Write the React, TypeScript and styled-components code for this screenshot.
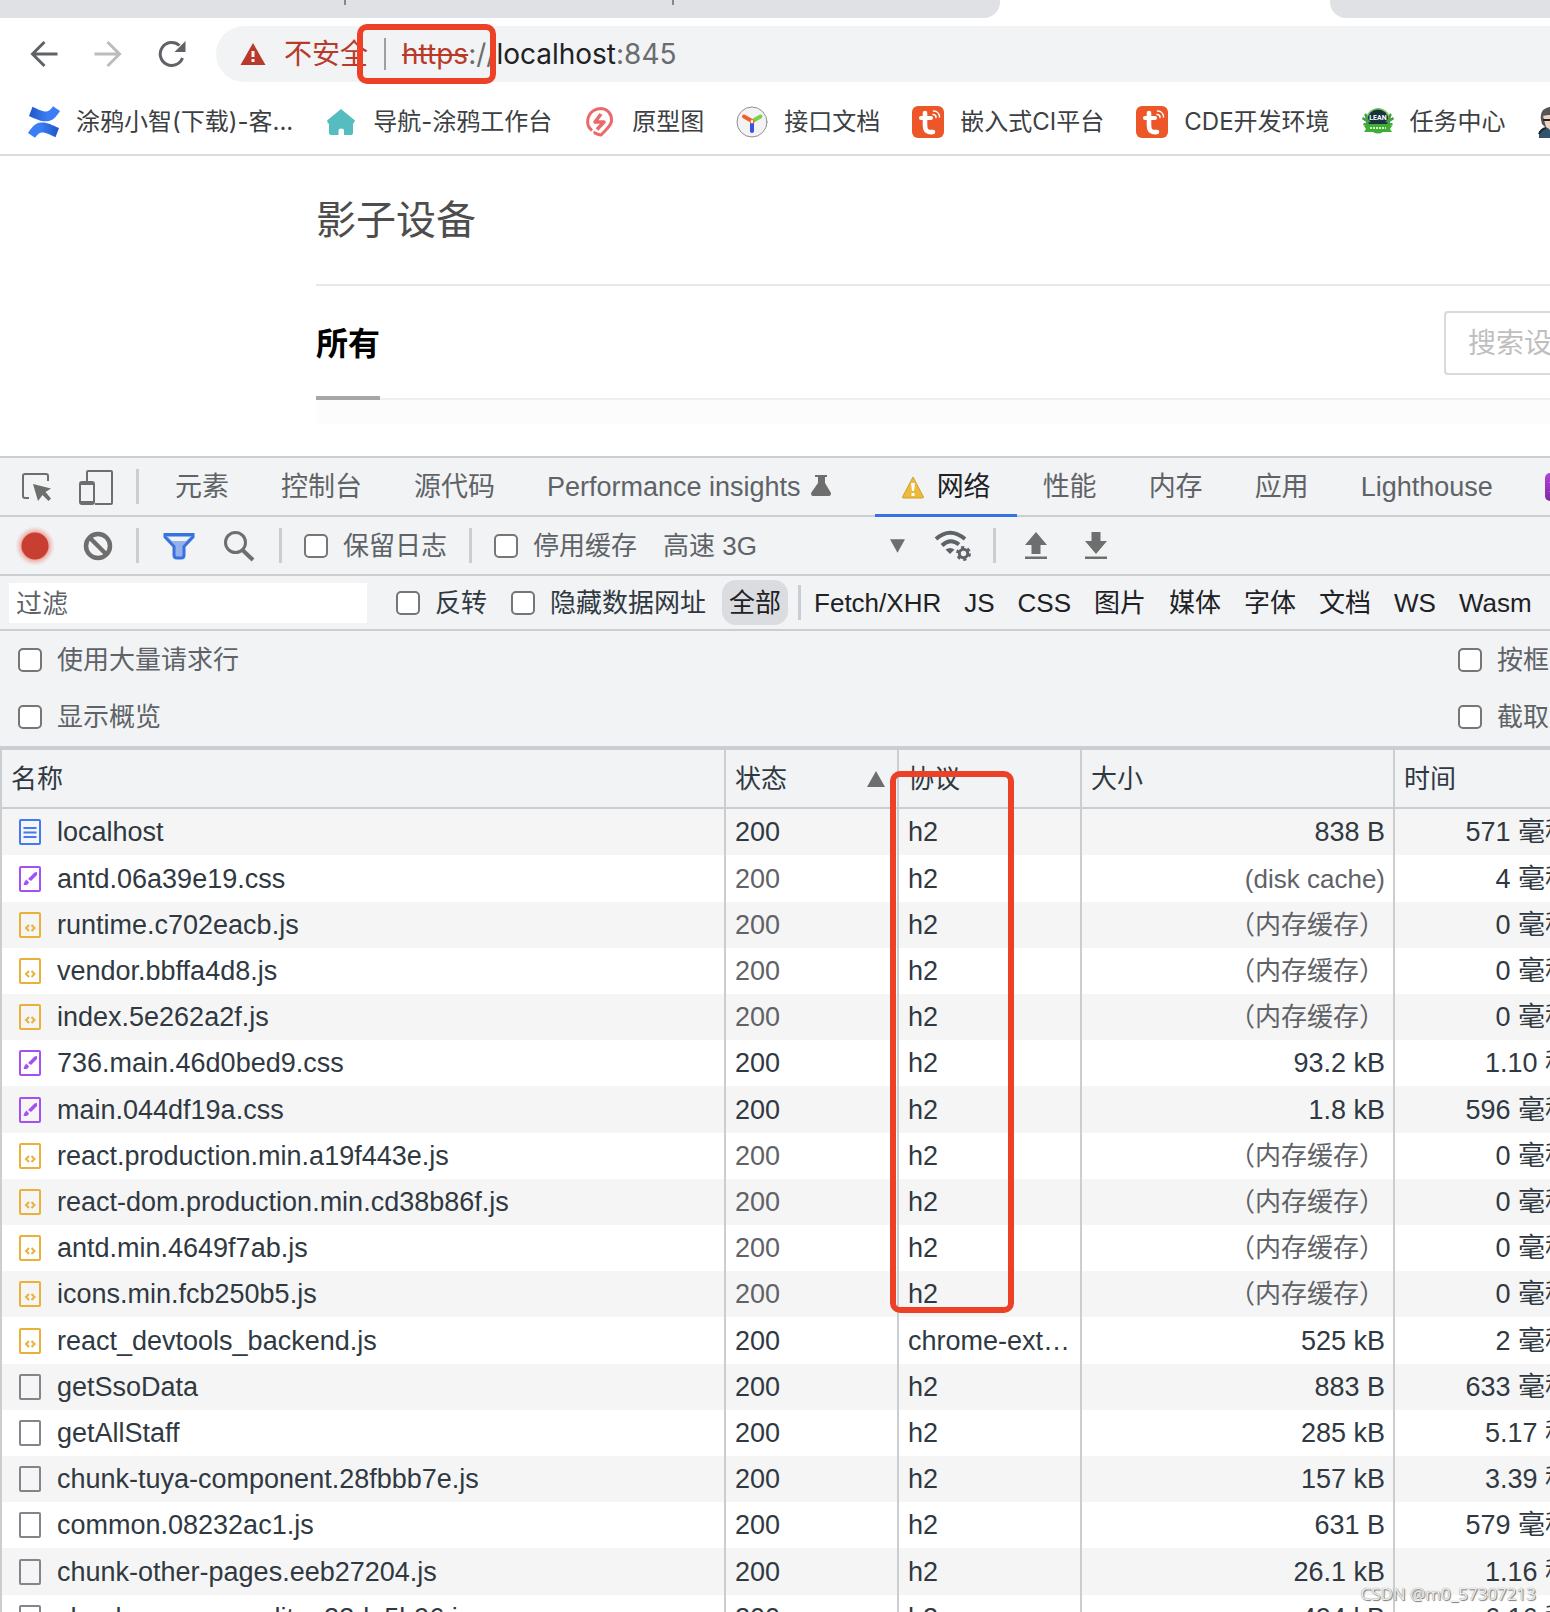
import React from "react";
import styled, { createGlobalStyle, css } from "styled-components";

const LATIN = `"Liberation Sans", "Noto Sans CJK SC", sans-serif`;
const CHROME = `Inter, "Noto Sans CJK SC", sans-serif`;

const color = {
  line: "#cacdd1",
  panel: "#f1f3f4",
  ink: "#303942",
  dim: "#5f6368",
  glyph: "#6e6e6e",
  accent: "#3871e0",
  mark: "#ec4126",
};

const Global = createGlobalStyle`
  *, *::before, *::after { box-sizing: border-box; }
  body { margin: 0; background: #fff; overflow: hidden; }
  button, input, select { font: inherit; color: inherit; }
`;

const Shell = styled.div`
  position: relative;
  display: flex;
  flex-direction: column;
  height: 100vh;
  overflow: hidden;
  font-family: ${LATIN};
  font-size: 26px;
  line-height: 32px;
  color: ${color.ink};
  white-space: nowrap;
`;

/* ---------- browser chrome ---------- */

const TabStrip = styled.div`
  display: flex;
  flex: none;
  justify-content: space-between;
  height: 18px;
`;

const InactiveTabs = styled.div<{ $side: "left" | "right" }>`
  display: flex;
  gap: 326px;
  background: #dfe1e5;
  ${(p) =>
    p.$side === "left"
      ? css`
          width: 1000px;
          padding-left: 344px;
          border-bottom-right-radius: 16px;
        `
      : css`
          width: 220px;
          border-bottom-left-radius: 16px;
        `}
`;

const TabDivider = styled.span`
  width: 2px;
  height: 5px;
  background: #85888c;
`;

const AddressRow = styled.div`
  display: flex;
  flex: none;
  align-items: center;
  gap: 24px;
  padding: 8px 0 8px 24px;
`;

const PlainButton = styled.button`
  display: flex;
  align-items: center;
  justify-content: center;
  padding: 0;
  border: 0;
  background: none;
`;

const NavButton = styled(PlainButton)`
  width: 40px;
  height: 40px;
`;

const Omnibox = styled.div`
  display: flex;
  flex: 1;
  align-items: center;
  gap: 16px;
  height: 56px;
  padding-left: 24px;
  border-radius: 28px 0 0 28px;
  background: ${color.panel};
  font-family: ${CHROME};
  font-size: 28px;
  color: #b93a2b;
`;

const OmniDivider = styled.span`
  width: 2px;
  height: 32px;
  background: #9aa0a6;
`;

const Url = styled.div`
  color: #6a6c70;
  s {
    color: #b93a2b;
  }
  b {
    font-weight: 400;
    color: #202124;
  }
`;

const Bookmarks = styled.nav`
  display: flex;
  flex: none;
  align-items: center;
  gap: 32px;
  height: 66px;
  padding-left: 28px;
  border-bottom: 2px solid #dadce0;
  overflow: hidden;
`;

const Bookmark = styled.a`
  display: flex;
  flex: none;
  align-items: center;
  gap: 16px;
  font-family: ${CHROME};
  font-size: 24px;
  color: #3c4043;
  text-decoration: none;
`;

/* ---------- web page ---------- */

const Page = styled.main`
  flex: none;
  padding: 0 0 32px 316px;
  overflow: hidden;
`;

const PageTitle = styled.h1`
  display: flex;
  align-items: center;
  height: 130px;
  margin: 0;
  border-bottom: 2px solid #e8e8e8;
  font-size: 40px;
  font-weight: 400;
  color: #4d4d4d;
`;

const PageTabs = styled.div`
  display: flex;
  align-items: center;
  justify-content: space-between;
  height: 114px;
  padding-top: 2px;
  border-bottom: 2px solid #eee;
`;

const PageTab = styled(PlainButton)`
  align-self: stretch;
  margin-bottom: -2px;
  padding-top: 4px;
  border-bottom: 4px solid #a6a6a6;
  font-size: 32px;
  font-weight: 700;
  color: #000;
`;

const SearchBox = styled.input`
  width: 106px;
  height: 64px;
  padding: 2px 0 0 22px;
  border: 2px solid #d9d9d9;
  border-right: 0;
  border-radius: 4px 0 0 4px;
  background: #fff;
  font-size: 28px;
  &::placeholder {
    color: #bfbfbf;
    opacity: 1;
  }
`;

const PageBand = styled.div`
  height: 24px;
  background: #fcfcfc;
`;

/* ---------- devtools ---------- */

const Bar = styled.div<{ $height: number }>`
  display: flex;
  flex: none;
  align-items: center;
  height: ${(p) => p.$height}px;
  padding-left: 6px;
  border-bottom: 2px solid ${color.line};
  background: ${color.panel};
  color: ${color.dim};
`;

const PanelTabs = styled(Bar)`
  border-top: 2px solid ${color.line};
`;

const ToolButton = styled(PlainButton)`
  flex: none;
  width: 60px;
  height: 48px;
  color: ${color.glyph};
`;

const Divider = styled.span<{ $tight?: boolean }>`
  flex: none;
  width: 3px;
  height: 35px;
  margin: 0 ${(p) => (p.$tight ? 6 : 10)}px 0 10px;
  background: ${color.line};
`;

const PanelTab = styled(PlainButton)<{ $active?: boolean }>`
  flex: none;
  gap: 10px;
  align-self: stretch;
  margin-bottom: -2px;
  padding: 2px 26px 0;
  border-bottom: 3px solid ${(p) => (p.$active ? color.accent : "transparent")};
  font-size: 27px;
  color: ${(p) => (p.$active ? "#202124" : color.dim)};
`;

const Label = styled.label<{ $strong?: boolean }>`
  display: flex;
  flex: none;
  align-items: center;
  gap: 15px;
  padding: 0 12px;
  color: ${(p) => (p.$strong ? color.ink : color.dim)};
`;

const Tick = styled.input.attrs({ type: "checkbox" })`
  flex: none;
  appearance: none;
  width: 24px;
  height: 24px;
  margin: 0;
  border: 2px solid #767676;
  border-radius: 5px;
  background: #fff;
`;

const Throttle = styled.div`
  display: grid;
  flex: none;
  width: 274px;
  align-items: center;
  svg {
    grid-area: 1 / 1;
    justify-self: end;
    margin-right: 18px;
    pointer-events: none;
  }
`;

const ThrottleSelect = styled.select`
  grid-area: 1 / 1;
  appearance: none;
  width: 100%;
  height: 40px;
  padding: 0 14px;
  border: 0;
  background: none;
`;

const FilterInput = styled.input`
  width: 358px;
  height: 40px;
  margin: 0 17px 0 3px;
  padding: 4px 7px 0;
  border: 0;
  background: #fff;
  &::placeholder {
    color: ${color.dim};
    opacity: 1;
  }
`;

const Chips = styled.div`
  display: flex;
  align-items: center;
  gap: 9px;
`;

const Chip = styled(PlainButton)<{ $on?: boolean }>`
  flex: none;
  height: 45px;
  margin-left: ${(p) => (p.$on ? 4 : 0)}px;
  padding: 0 7px;
  border-radius: 14px;
  background: ${(p) => (p.$on ? "#dadce0" : "none")};
  color: #202124;
`;

const Settings = styled.div`
  display: grid;
  flex: none;
  grid-template-columns: 1fr 104px;
  grid-auto-rows: 57px;
  padding: 0 0 1px 6px;
  border-bottom: 4px solid ${color.line};
  background: ${color.panel};
`;

const Grid = styled.table`
  flex: none;
  width: calc(100% + 30px);
  table-layout: fixed;
  border-collapse: separate;
  border-spacing: 0;
`;

const Col = styled.col<{ $w?: number }>`
  width: ${(p) => (p.$w ? `${p.$w}px` : "auto")};
`;

const Head = styled.th`
  height: 59px;
  padding: 0 12px 0 9px;
  border-left: 2px solid ${color.line};
  border-bottom: 2px solid ${color.line};
  background: ${color.panel};
  font-weight: 400;
  text-align: left;
`;

const HeadInner = styled.div`
  display: flex;
  align-items: center;
  justify-content: space-between;
`;

const Row = styled.tr`
  height: 46px;
  &:nth-child(odd) {
    background: #f5f5f5;
  }
  &:nth-child(5n + 2) {
    height: 47px;
  }
`;

const Cell = styled.td<{ $right?: boolean; $dim?: boolean }>`
  padding: 0 8px 0 9px;
  border-left: 2px solid ${color.line};
  overflow: hidden;
  text-overflow: ellipsis;
  font-size: ${(p) => (p.$right && p.$dim ? 26 : 27)}px;
  text-align: ${(p) => (p.$right ? "right" : "left")};
  color: ${(p) => (p.$dim ? color.dim : color.ink)};
`;

const NameInner = styled.div`
  display: flex;
  align-items: center;
  gap: 16px;
  padding-left: 6px;
`;

/* ---------- marks drawn over the screen ---------- */

const Mark = styled.div<{ $x: number; $y: number; $w: number; $h: number }>`
  position: absolute;
  left: ${(p) => p.$x}px;
  top: ${(p) => p.$y}px;
  width: ${(p) => p.$w}px;
  height: ${(p) => p.$h}px;
  border: 6px solid ${color.mark};
  border-radius: 10px;
  pointer-events: none;
`;

const Watermark = styled.div`
  position: absolute;
  right: 14px;
  bottom: 6px;
  font-family: "Open Sans", sans-serif;
  font-size: 17px;
  line-height: 24px;
  color: #eee;
  text-shadow: 0 0 1px #777, 1px 1px 1px #777;
`;

/* ---------- icons ---------- */

const BackIcon = ({ flip = false }: { flip?: boolean }) => (
  <svg width="28" height="28" viewBox="0 0 28 28" fill="none" stroke={flip ? "#babcbe" : "#5f6368"} strokeWidth="3">
    {flip ? <path d="M0.500 14H25M13.500 2L25.500 14L13.500 26" /> : <path d="M27.500 14H3M14.500 2L2.500 14L14.500 26" />}
  </svg>
);

const ReloadIcon = () => (
  <svg width="28" height="28" viewBox="0 0 28 28">
    <path d="M24.500 18A11.500 11.500 0 1 1 21.500 5.500" fill="none" stroke="#5f6368" strokeWidth="3" />
    <path d="M27.500 1V12H16.500Z" fill="#5f6368" />
  </svg>
);

const DangerIcon = () => (
  <svg width="28" height="24" viewBox="0 0 28 24">
    <path d="M13 1L25.500 23H0.500Z" fill="#b93a2b" />
    <path d="M11.500 9h3v6h-3zM11.500 17h3v3h-3z" fill="#f1f3f4" />
  </svg>
);

const ConfluenceIcon = () => (
  <svg width="32" height="32" viewBox="0 0 32 32">
    <defs>
      <linearGradient id="cfA" x1="0" y1="0" x2="1" y2="0">
        <stop offset="0" stopColor="#1f55c8" />
        <stop offset="0.600" stopColor="#3b7df5" />
      </linearGradient>
      <linearGradient id="cfB" x1="1" y1="0" x2="0" y2="0">
        <stop offset="0" stopColor="#1f55c8" />
        <stop offset="0.600" stopColor="#3b7df5" />
      </linearGradient>
    </defs>
    <path d="M4.500 0.800L1 10C9 13.500 13 15.800 19 15.300C25 14.800 28 11 32 5L25 0.300C22 4.500 20 6 16.500 5.500C13 5 9 3 4.500 0.800Z" fill="url(#cfA)" />
    <path d="M27.500 31.300L31 22C23 18.500 19 16 13 16.500C7 17 4 21 0 27L7 31.700C10 27.500 12 26 15.500 26.500C19 27 23 29 27.500 31.300Z" fill="url(#cfB)" />
  </svg>
);

const HomeIcon = () => (
  <svg width="32" height="32" viewBox="0 0 32 32">
    <path d="M16 3L30 14.500L28.500 17.500H28V27Q28 29 26 29H19V24.500Q19 22.500 16 22.500Q13.500 22.500 13.500 24.500V29H6Q4 29 4 27V17.500H3L2 14.500Z" fill="#55bcc0" />
  </svg>
);

const BoltIcon = () => (
  <svg width="32" height="32" viewBox="0 0 32 32" fill="none" stroke="#ea6a6b">
    <path d="M8 24.500C3.500 21 3 17 4 12.500C6 4.500 13 2.500 17 2.500C24 3 28 8.500 27.500 15C27 20 22 23.500 17 29C13 28.500 11 26.500 9.500 26.500" strokeWidth="3" />
    <path d="M17 8L11 16H20L13 23.500" strokeWidth="3.500" strokeLinejoin="round" />
  </svg>
);

const YapiIcon = () => (
  <svg width="32" height="32" viewBox="0 0 32 32" strokeLinecap="round" strokeWidth="4">
    <circle cx="16" cy="16" r="15" fill="#f3f3f5" stroke="#909090" strokeWidth="1" />
    <path d="M16 17V25" stroke="#2f54eb" />
    <path d="M15 14.500L8 10.500" stroke="#ee5f2c" />
    <path d="M17.500 14.500L24.500 10.500" stroke="#7ad346" />
    <circle cx="16" cy="15.500" r="2" fill="#fff" stroke="#ee5f2c" strokeWidth="1" />
  </svg>
);

const TuyaIcon = () => (
  <svg width="32" height="32" viewBox="0 0 32 32" fill="none" stroke="#fff" strokeLinecap="round">
    <rect width="32" height="32" rx="6" fill="#ed5628" stroke="none" />
    <path d="M9 12H19" strokeWidth="4" />
    <path d="M13 7V19C13 25 15.500 26.500 21 26" strokeWidth="4.600" />
    <path d="M21 8.500C23 8.500 24 10 24 11.500M21.500 5C25.500 5 27.500 8 27.500 11" strokeWidth="1.500" />
  </svg>
);

const LeanIcon = () => (
  <svg width="32" height="32" viewBox="0 0 32 32">
    <circle cx="16" cy="14" r="12" fill="#7cc35c" />
    <circle cx="16" cy="14" r="10.500" fill="#17343f" />
    <path d="M3 8C5 10 4 13 6 15C4 15 6 20 7 21M29 8C27 10 28 13 26 15C28 15 26 20 25 21M0.500 12L5 15M31.500 12L27 15M1.500 18L6 19M30.500 18L26 19" stroke="#45a047" strokeWidth="2.500" fill="none" />
    <path d="M2 20L7 18H25L30 20L28 23L30 26H21Q16 29 11 26H2L4 23Z" fill="#3fae35" />
    <path d="M8 22H24" stroke="#d9f2cf" strokeWidth="2" strokeDasharray="2 1" />
    <text x="16" y="14" fill="#fff" fontFamily="Roboto, sans-serif" fontSize="7" fontWeight="700" textAnchor="middle">LEAN</text>
  </svg>
);

const PersonIcon = () => (
  <svg width="32" height="32" viewBox="0 0 32 32">
    <path d="M4 18Q1 9 5 4Q11 -1 20 1Q28 4 27 14L24 22H8Z" fill="#55565a" />
    <path d="M5 10Q12 8 15 10Q22 9 25 12L23 21Q15 27 8 21Z" fill="#f0d3bd" />
    <path d="M5 14H12" stroke="#222" strokeWidth="2" />
    <path d="M1 32V26Q6 21 10 22Q16 28 22 22Q31 24 31 32Z" fill="#31546e" />
    <path d="M1 28Q3 23 8 22" stroke="#222" strokeWidth="2" fill="none" />
  </svg>
);

const InspectIcon = () => (
  <svg width="32" height="32" viewBox="0 0 32 32">
    <path d="M9 27H5Q3 27 3 25V5Q3 3 5 3H26Q28 3 28 5V10" fill="none" stroke="#6e6e6e" strokeWidth="2" />
    <path d="M13 13L31 17.500L25.500 21L31 27.500L28.500 30L22.500 24L18 30Z" fill="#6e6e6e" />
  </svg>
);

const DeviceIcon = () => (
  <svg width="36" height="36" viewBox="0 0 36 36" fill="none" stroke="#6e6e6e" strokeWidth="2">
    <path d="M9 12V3Q9 2 10 2H33Q34 2 34 3V34Q34 35 33 35H17" />
    <rect x="2" y="13" width="14" height="22" rx="2" />
    <path d="M2 14.500H16M2 33.500H16" strokeWidth="3" />
  </svg>
);

const FlaskIcon = () => (
  <svg width="38" height="26" viewBox="0 0 38 26" fill="#6e6e6e">
    <path d="M4 1H16V3H14V9L20 19Q20 22 18 22H2Q0 22 0 19L7 9V3H4Z" />
  </svg>
);

const WarnIcon = () => (
  <svg width="26" height="24" viewBox="0 0 26 24">
    <path d="M12 2L22.500 22Q22.500 23 21.500 23H2.500Q1.500 23 1.500 22Z" fill="#ecbb3c" stroke="#d3a02c" />
    <path d="M10 8h4l-1 8h-2zM10.500 18h3v3h-3z" fill="#fff" />
  </svg>
);

const ReduxIcon = () => (
  <svg width="28" height="28" viewBox="0 0 28 28">
    <defs>
      <linearGradient id="rdx" x1="0" y1="0" x2="0" y2="1">
        <stop offset="0" stopColor="#b443d8" />
        <stop offset="1" stopColor="#8129a3" />
      </linearGradient>
    </defs>
    <rect width="28" height="28" rx="5" fill="url(#rdx)" />
    <path d="M5 9L10 14L5 19M5 9H10V11M5 19H10V17" fill="none" stroke="#fff" strokeWidth="1.500" />
  </svg>
);

const RecordIcon = () => (
  <svg width="40" height="40" viewBox="0 0 40 40">
    <defs>
      <radialGradient id="halo">
        <stop offset="0.650" stopColor="#e4776b" stopOpacity="0.700" />
        <stop offset="1" stopColor="#f1b5ae" stopOpacity="0" />
      </radialGradient>
    </defs>
    <circle cx="19" cy="20" r="20" fill="url(#halo)" />
    <circle cx="19" cy="20" r="13.500" fill="#c83e31" />
  </svg>
);

const ClearIcon = () => (
  <svg width="34" height="30" viewBox="0 0 34 30" fill="none" stroke="#6e6e6e" strokeWidth="4.500">
    <circle cx="19" cy="15" r="12" />
    <path d="M10.500 6.500L27.500 23.500" />
  </svg>
);

const FunnelIcon = () => (
  <svg width="32" height="28" viewBox="0 0 32 28">
    <path d="M2 2.500H30V5L21 14.500V23Q21 26 18 26H14Q11 26 11 23V14.500L2 5Z" fill="#94b1ea" stroke="#3871e0" strokeWidth="3" />
    <path d="M5 5H27L23 9H9Z" fill="#f1f3f4" />
  </svg>
);

const SearchIcon = () => (
  <svg width="32" height="32" viewBox="0 0 32 32" fill="none" stroke="#6e6e6e">
    <circle cx="12.500" cy="12.500" r="10" strokeWidth="3" />
    <path d="M19.500 20L30 30" strokeWidth="4" />
  </svg>
);

const CaretIcon = ({ up = false }: { up?: boolean }) => (
  <svg width={up ? 18 : 15} height={up ? 16 : 14} viewBox="0 0 18 16">
    <path d={up ? "M9 0L18 16H0Z" : "M0 0H18L9 16Z"} fill="#6e6e6e" />
  </svg>
);

const WifiGearIcon = () => (
  <svg width="38" height="32" viewBox="0 0 38 32" fill="none" stroke="#5f6368">
    <path d="M2 9Q16 -3.500 31 9" strokeWidth="4" />
    <path d="M8 15.500Q16 7.500 25 14.500" strokeWidth="4" />
    <path d="M11.500 19.500Q16 16.500 20.500 19.500L16 24Z" fill="#5f6368" stroke="none" />
    <circle cx="29.500" cy="23.500" r="4.200" strokeWidth="3" />
    <circle cx="29.500" cy="23.500" r="6.200" strokeWidth="2.500" strokeDasharray="3.200 3.300" />
  </svg>
);

const TransferIcon = ({ down = false }: { down?: boolean }) => (
  <svg width="22" height="28" viewBox="0 0 22 28" fill="#6e6e6e">
    <path d={down ? "M6.500 0H15.500V9H22L11 22L0 9H6.500Z" : "M11 0L22 13H15.500V22H6.500V13H0Z"} />
    <path d="M0 24.500h22v2.500H0z" />
  </svg>
);

type Kind = "doc" | "css" | "js" | "other";
const kindColor: Record<Kind, string> = { doc: "#4279f4", css: "#a450f6", js: "#e9b03a", other: "#80868b" };

const FileIcon = ({ kind }: { kind: Kind }) => (
  <svg width="24" height="28" viewBox="0 0 24 28" fill="none" stroke={kindColor[kind]} strokeWidth="2">
    <rect x="3" y="2" width="20" height="24" rx="1" />
    {kind === "doc" && <path d="M6.500 10H19.500M6.500 14.500H19.500M6.500 19H19.500" />}
    {kind === "css" && (
      <g stroke="none" fill={kindColor.css}>
        <path d="M17.500 7.500L20 7V10L14 16L11 14L17.500 7.500Z" />
        <path d="M9.500 14.500L12 17.500Q11 20.500 6.500 20Q7.500 16 9.500 14.500Z" />
      </g>
    )}
    {kind === "js" && <path d="M12 14L9 17L12 20M14.500 14L17.500 17L14.500 20" />}
  </svg>
);

/* ---------- data ---------- */

const bookmarks: [React.ReactNode, string][] = [
  [<ConfluenceIcon />, "涂鸦小智(下载)-客..."],
  [<HomeIcon />, "导航-涂鸦工作台"],
  [<BoltIcon />, "原型图"],
  [<YapiIcon />, "接口文档"],
  [<TuyaIcon />, "嵌入式CI平台"],
  [<TuyaIcon />, "CDE开发环境"],
  [<LeanIcon />, "任务中心"],
  [<PersonIcon />, ""],
];

const chips = ["Fetch/XHR", "JS", "CSS", "图片", "媒体", "字体", "文档", "WS", "Wasm"];

const MEM = "（内存缓存）";

type Request = { kind: Kind; name: string; protocol?: string; size: string; time: string; cached?: boolean };

const requests: Request[] = [
  { kind: "doc", name: "localhost", size: "838 B", time: "571 毫秒" },
  { kind: "css", name: "antd.06a39e19.css", size: "(disk cache)", time: "4 毫秒", cached: true },
  { kind: "js", name: "runtime.c702eacb.js", size: MEM, time: "0 毫秒", cached: true },
  { kind: "js", name: "vendor.bbffa4d8.js", size: MEM, time: "0 毫秒", cached: true },
  { kind: "js", name: "index.5e262a2f.js", size: MEM, time: "0 毫秒", cached: true },
  { kind: "css", name: "736.main.46d0bed9.css", size: "93.2 kB", time: "1.10 秒" },
  { kind: "css", name: "main.044df19a.css", size: "1.8 kB", time: "596 毫秒" },
  { kind: "js", name: "react.production.min.a19f443e.js", size: MEM, time: "0 毫秒", cached: true },
  { kind: "js", name: "react-dom.production.min.cd38b86f.js", size: MEM, time: "0 毫秒", cached: true },
  { kind: "js", name: "antd.min.4649f7ab.js", size: MEM, time: "0 毫秒", cached: true },
  { kind: "js", name: "icons.min.fcb250b5.js", size: MEM, time: "0 毫秒", cached: true },
  { kind: "js", name: "react_devtools_backend.js", protocol: "chrome-extension", size: "525 kB", time: "2 毫秒" },
  { kind: "other", name: "getSsoData", size: "883 B", time: "633 毫秒" },
  { kind: "other", name: "getAllStaff", size: "285 kB", time: "5.17 秒" },
  { kind: "other", name: "chunk-tuya-component.28fbbb7e.js", size: "157 kB", time: "3.39 秒" },
  { kind: "other", name: "common.08232ac1.js", size: "631 B", time: "579 毫秒" },
  { kind: "other", name: "chunk-other-pages.eeb27204.js", size: "26.1 kB", time: "1.16 秒" },
  { kind: "other", name: "chunk-common-editor.23da5b96.js", size: "494 kB", time: "6.16 秒" },
];

const Check = ({ text, strong }: { text: string; strong?: boolean }) => (
  <Label $strong={strong}>
    <Tick />
    {text}
  </Label>
);

export default function App() {
  return (
    <Shell>
      <Global />
      <TabStrip>
        <InactiveTabs $side="left">
          <TabDivider />
          <TabDivider />
        </InactiveTabs>
        <InactiveTabs $side="right" />
      </TabStrip>
      <AddressRow>
        <NavButton aria-label="后退"><BackIcon /></NavButton>
        <NavButton aria-label="前进"><BackIcon flip /></NavButton>
        <NavButton aria-label="重新加载"><ReloadIcon /></NavButton>
        <Omnibox>
          <DangerIcon />
          <span>不安全</span>
          <OmniDivider />
          <Url role="textbox" aria-label="地址">
            <s>https</s>://<b>localhost</b>:845
          </Url>
        </Omnibox>
      </AddressRow>
      <Bookmarks>
        {bookmarks.map(([icon, text], i) => (
          <Bookmark href="#" key={i}>
            {icon}
            {text}
          </Bookmark>
        ))}
      </Bookmarks>

      <Page>
        <PageTitle>影子设备</PageTitle>
        <PageTabs>
          <PageTab>所有</PageTab>
          <SearchBox placeholder="搜索设备" aria-label="搜索设备" />
        </PageTabs>
        <PageBand />
      </Page>

      <PanelTabs $height={61}>
        <ToolButton aria-label="检查元素"><InspectIcon /></ToolButton>
        <ToolButton aria-label="设备工具栏"><DeviceIcon /></ToolButton>
        <Divider />
        <PanelTab>元素</PanelTab>
        <PanelTab>控制台</PanelTab>
        <PanelTab>源代码</PanelTab>
        <PanelTab>Performance insights<FlaskIcon /></PanelTab>
        <PanelTab $active><WarnIcon />网络</PanelTab>
        <PanelTab>性能</PanelTab>
        <PanelTab>内存</PanelTab>
        <PanelTab>应用</PanelTab>
        <PanelTab>Lighthouse</PanelTab>
        <PanelTab aria-label="Redux"><ReduxIcon /></PanelTab>
      </PanelTabs>

      <Bar $height={59}>
        <ToolButton aria-label="录制"><RecordIcon /></ToolButton>
        <ToolButton aria-label="清除"><ClearIcon /></ToolButton>
        <Divider />
        <ToolButton aria-label="过滤器"><FunnelIcon /></ToolButton>
        <ToolButton aria-label="搜索"><SearchIcon /></ToolButton>
        <Divider />
        <Check text="保留日志" />
        <Divider />
        <Check text="停用缓存" />
        <Throttle>
          <ThrottleSelect aria-label="节流">
            <option>高速 3G</option>
          </ThrottleSelect>
          <CaretIcon />
        </Throttle>
        <ToolButton aria-label="网络状况"><WifiGearIcon /></ToolButton>
        <Divider />
        <ToolButton aria-label="导入"><TransferIcon /></ToolButton>
        <ToolButton aria-label="导出"><TransferIcon down /></ToolButton>
      </Bar>

      <Bar $height={55}>
        <FilterInput placeholder="过滤" aria-label="过滤" />
        <Check text="反转" strong />
        <Check text="隐藏数据网址" strong />
        <Chip $on>全部</Chip>
        <Divider $tight />
        <Chips>
          {chips.map((c) => (
            <Chip key={c}>{c}</Chip>
          ))}
        </Chips>
      </Bar>

      <Settings>
        <Check text="使用大量请求行" />
        <Check text="按框架分组" />
        <Check text="显示概览" />
        <Check text="截取屏幕截图" />
      </Settings>

      <Grid>
        <colgroup>
          <Col />
          <Col $w={173} />
          <Col $w={183} />
          <Col $w={313} />
          <Col $w={187} />
        </colgroup>
        <thead>
          <tr>
            <Head>名称</Head>
            <Head>
              <HeadInner>
                状态
                <CaretIcon up />
              </HeadInner>
            </Head>
            <Head>协议</Head>
            <Head>大小</Head>
            <Head>时间</Head>
          </tr>
        </thead>
        <tbody>
          {requests.map((r) => (
            <Row key={r.name}>
              <Cell>
                <NameInner>
                  <FileIcon kind={r.kind} />
                  {r.name}
                </NameInner>
              </Cell>
              <Cell $dim={r.cached}>200</Cell>
              <Cell>{r.protocol ?? "h2"}</Cell>
              <Cell $right $dim={r.cached}>{r.size}</Cell>
              <Cell $right>{r.time}</Cell>
            </Row>
          ))}
        </tbody>
      </Grid>

      <Mark $x={357} $y={24} $w={139} $h={60} />
      <Mark $x={890} $y={771} $w={124} $h={542} />
      <Watermark>CSDN @m0_57307213</Watermark>
    </Shell>
  );
}
